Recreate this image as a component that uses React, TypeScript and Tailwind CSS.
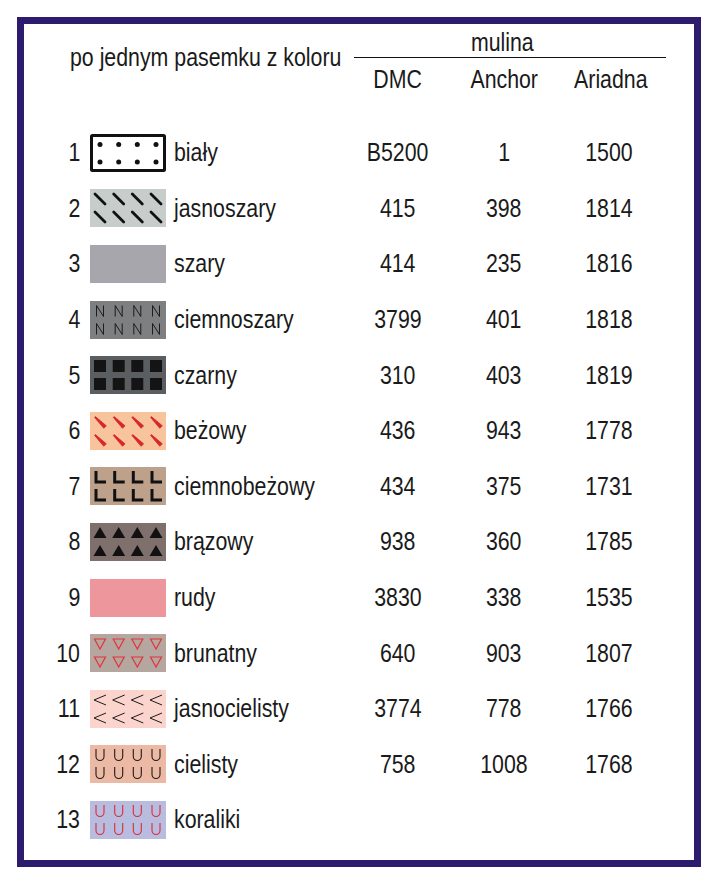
import React from "react";

type Row = {
    no: number;
    name: string;
    swatch: string;
    dmc?: string;
    anchor?: string;
    ariadna?: string;
};

const rows: Row[] = [
    { no: 1, name: "biały", swatch: "dots", dmc: "B5200", anchor: "1", ariadna: "1500" },
    { no: 2, name: "jasnoszary", swatch: "dash", dmc: "415", anchor: "398", ariadna: "1814" },
    { no: 3, name: "szary", swatch: "gray", dmc: "414", anchor: "235", ariadna: "1816" },
    { no: 4, name: "ciemnoszary", swatch: "n", dmc: "3799", anchor: "401", ariadna: "1818" },
    { no: 5, name: "czarny", swatch: "squares", dmc: "310", anchor: "403", ariadna: "1819" },
    { no: 6, name: "beżowy", swatch: "reddash", dmc: "436", anchor: "943", ariadna: "1778" },
    { no: 7, name: "ciemnobeżowy", swatch: "ell", dmc: "434", anchor: "375", ariadna: "1731" },
    { no: 8, name: "brązowy", swatch: "tri", dmc: "938", anchor: "360", ariadna: "1785" },
    { no: 9, name: "rudy", swatch: "pink", dmc: "3830", anchor: "338", ariadna: "1535" },
    { no: 10, name: "brunatny", swatch: "tridown", dmc: "640", anchor: "903", ariadna: "1807" },
    { no: 11, name: "jasnocielisty", swatch: "lt", dmc: "3774", anchor: "778", ariadna: "1766" },
    { no: 12, name: "cielisty", swatch: "u", dmc: "758", anchor: "1008", ariadna: "1768" },
    { no: 13, name: "koraliki", swatch: "ured" },
];

const cols = [10, 28.7, 47.3, 66];
const lines = [10, 28];

const cells = (fn: (cx: number, cy: number, key: string) => React.ReactNode) =>
    lines.flatMap((cy) => cols.map((cx) => fn(cx, cy, `${cx}-${cy}`)));

const bg: Record<string, string> = {
    dots: "#ffffff",
    dash: "#c6cdca",
    gray: "#a6a6ac",
    n: "#7e7f81",
    squares: "#5b5e61",
    reddash: "#f7c49c",
    ell: "#bea18b",
    tri: "#7f706d",
    pink: "#ed969b",
    tridown: "#b5a79f",
    lt: "#fad4cd",
    u: "#ecb9a4",
    ured: "#b8bcdf",
};

// the print uses a narrow grotesk, squeeze Liberation Sans to match
const Txt = ({ children, align = "left" }: { children?: React.ReactNode; align?: "left" | "center" | "right" }) => (
    <span
        className={
            "inline-block whitespace-nowrap scale-x-[0.82] " +
            (align === "left" ? "origin-left" : align === "right" ? "origin-right" : "origin-center")
        }
    >
        {children}
    </span>
);

const Swatch = ({ kind }: { kind: string }) => {
    let marks: React.ReactNode = null;
    switch (kind) {
        case "dots":
            marks = (
                <>
                    <rect x="1.5" y="1.5" width="73" height="35" fill="none" stroke="#111" strokeWidth="3" rx="1" />
                    {lines.map((cy, r) =>
                        cols.map((cx) => (
                            <circle key={`${cx}-${r}`} cx={cx} cy={r === 0 ? 10.5 : 28} r="2.5" fill="#111" />
                        )),
                    )}
                </>
            );
            break;
        case "dash":
            marks = cells((cx, cy, k) => (
                <line key={k} x1={cx - 5} y1={cy - 5} x2={cx + 5} y2={cy + 5} stroke="#111" strokeWidth="2.8" strokeLinecap="round" />
            ));
            break;
        case "reddash":
            marks = cells((cx, cy, k) => (
                <polygon
                    key={k}
                    points={`${cx - 5.4},${cy - 4.6} ${cx - 4.6},${cy - 5.4} ${cx + 6.3},${cy + 3.8} ${cx + 3.8},${cy + 6.3}`}
                    fill="#d8262a"
                    stroke="#d8262a"
                    strokeWidth="0.8"
                    strokeLinejoin="round"
                />
            ));
            break;
        case "n":
            marks = cells((cx, cy, k) => (
                <polyline
                    key={k}
                    points={`${cx - 3.5},${cy + 5.5} ${cx - 3.5},${cy - 5.5} ${cx + 3.5},${cy + 5.5} ${cx + 3.5},${cy - 5.5}`}
                    fill="none"
                    stroke="#1c1c1c"
                    strokeWidth="1"
                />
            ));
            break;
        case "squares":
            marks = cells((cx, cy, k) => (
                <rect key={k} x={cx - 6} y={cy - 6} width="12" height="12" fill="#141414" />
            ));
            break;
        case "ell":
            marks = cells((cx, cy, k) => (
                <path key={k} d={`M${cx - 4} ${cy - 6} V${cy + 5} H${cx + 6}`} fill="none" stroke="#111" strokeWidth="3" />
            ));
            break;
        case "tri":
            marks = cells((cx, cy, k) => (
                <polygon key={k} points={`${cx},${cy - 6} ${cx + 6.5},${cy + 5} ${cx - 6.5},${cy + 5}`} fill="#111" />
            ));
            break;
        case "tridown":
            marks = cells((cx, cy, k) => (
                <polygon
                    key={k}
                    points={`${cx - 5.5},${cy - 5} ${cx + 5.5},${cy - 5} ${cx},${cy + 5}`}
                    fill="none"
                    stroke="#e0343a"
                    strokeWidth="1.2"
                />
            ));
            break;
        case "lt":
            marks = cells((cx, cy, k) => (
                <polyline
                    key={k}
                    points={`${cx + 6},${cy - 5} ${cx - 6},${cy} ${cx + 6},${cy + 5}`}
                    fill="none"
                    stroke="#1c1c1c"
                    strokeWidth="1"
                />
            ));
            break;
        case "u":
        case "ured":
            marks = cells((cx, cy, k) => (
                <path
                    key={k}
                    d={`M${cx - 4} ${cy - 6} V${cy + 1.5} A4 4 0 0 0 ${cx + 4} ${cy + 1.5} V${cy - 6}`}
                    fill="none"
                    stroke={kind === "u" ? "#1c1c1c" : "#dd2b3a"}
                    strokeWidth="1.1"
                />
            ));
            break;
    }
    return (
        <svg width="76" height="38" viewBox="0 0 76 38" className="block shrink-0">
            <rect x="0" y="0" width="76" height="38" fill={bg[kind]} />
            {marks}
        </svg>
    );
};

export default function App() {
    return (
        <div
            className="bg-white p-[17px] text-[#1a1a1a] text-[26px] leading-[25px]"
            style={{ fontFamily: '"Liberation Sans", Arial, sans-serif' }}
        >
            <div className="w-[684px] h-[850px] border-[7px] border-[#2d1b6e] flex flex-col">
                {/* header */}
                <div className="flex h-[101px]">
                    <div className="w-[330px] pl-[46px] pt-[21px]">
                        <Txt>po jednym pasemku z koloru</Txt>
                    </div>
                    <div className="w-[312px] flex flex-col">
                        <div className="pt-[6px] pr-[16px] text-center h-[33px]">
                            <Txt align="center">mulina</Txt>
                        </div>
                        <div className="border-t border-[#111]" />
                        <div className="flex pt-[9px]">
                            <div className="w-[88px] text-center">
                                <Txt align="center">DMC</Txt>
                            </div>
                            <div className="w-[124px] text-center">
                                <Txt align="center">Anchor</Txt>
                            </div>
                            <div className="w-[86px] text-center">
                                <Txt align="center">Ariadna</Txt>
                            </div>
                        </div>
                    </div>
                </div>
                {/* rows */}
                <div className="flex flex-col">
                    {rows.map((r) => (
                        <div key={r.no} className="flex items-center h-[55.6px]">
                            <div className="w-[56px] text-right">
                                <Txt align="right">{r.no}</Txt>
                            </div>
                            <div className="ml-[10px]">
                                <Swatch kind={r.swatch} />
                            </div>
                            <div className="ml-[8px] w-[180px]">
                                <Txt>{r.name}</Txt>
                            </div>
                            <div className="w-[88px] text-center">
                                <Txt align="center">{r.dmc}</Txt>
                            </div>
                            <div className="w-[124px] text-center">
                                <Txt align="center">{r.anchor}</Txt>
                            </div>
                            <div className="w-[86px] text-center">
                                <Txt align="center">{r.ariadna}</Txt>
                            </div>
                        </div>
                    ))}
                </div>
            </div>
        </div>
    );
}
